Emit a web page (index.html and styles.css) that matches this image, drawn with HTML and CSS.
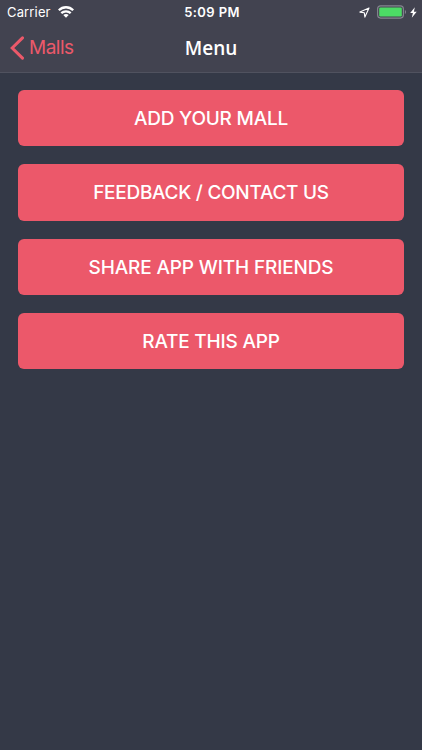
FILE: index.html
```html
<!DOCTYPE html>
<html lang="en">
<head>
<meta charset="utf-8">
<title>Menu</title>
<link rel="stylesheet" href="styles.css">
</head>
<body>
<header class="header">
  <div class="status">
    <div class="status-left">
      <span class="carrier">Carrier</span>
      <svg class="wifi" width="16" height="12" viewBox="0 0 16 12" fill="none" stroke="#fff" stroke-width="2.300">
        <path d="M.8 4.300C4.800.2 11.200.2 15.200 4.300"/>
        <path d="M3.300 7.200c2.600-2.500 6.800-2.500 9.400 0"/>
        <path d="M5.300 9.100c1.500-1.400 3.900-1.400 5.400 0L8 11.800z" fill="#fff" stroke="none"/>
      </svg>
    </div>
    <span class="time">5:09 PM</span>
    <div class="status-right">
      <svg class="location" width="11" height="11" viewBox="0 0 11 11" fill="none" stroke="#fff" stroke-width="1.100" stroke-linejoin="round">
        <path d="M10 1 .9 5.100l4.400.6.6 4.400z"/>
      </svg>
      <svg class="battery" width="30" height="14" viewBox="0 0 30 14">
        <rect x=".6" y=".9" width="25.800" height="12.200" rx="3" fill="none" stroke="#858690" stroke-width="1.100"/>
        <rect x="2.200" y="2.500" width="22.600" height="9" rx="1.300" fill="#4cdb65"/>
        <path d="M27.900 5v4c1.500-.6 1.500-3.400 0-4z" fill="#858690"/>
      </svg>
      <svg class="bolt" width="7" height="11" viewBox="0 0 7 11">
        <path d="M4.800.2.2 6.100h2.700L1.800 10.800 6.700 4.700H3.900z" fill="#fff"/>
      </svg>
    </div>
  </div>
  <nav class="navbar">
    <a class="back">
      <svg class="chevron" width="15" height="24" viewBox="0 0 15 24" fill="none" stroke="#ec596a" stroke-width="3" stroke-linecap="round" stroke-linejoin="miter">
        <path d="M12.500 1.900 2.200 12l10.300 10.100"/>
      </svg>
      <span>Malls</span>
    </a>
    <h1 class="title">Menu</h1>
  </nav>
</header>
<main class="menu">
  <button class="action add">ADD YOUR MALL</button>
  <button class="action feedback">FEEDBACK / CONTACT US</button>
  <button class="action share">SHARE APP WITH FRIENDS</button>
  <button class="action rate">RATE THIS APP</button>
</main>
</body>
</html>
```
FILE: styles.css
```css
* { box-sizing: border-box; }
body {
  margin: 0;
  height: 750px;
  overflow: hidden;
  background: #343947;
  color: #fff;
  font-family: Inter, "Liberation Sans", sans-serif;
}
.header {
  height: 73px;
  background: #424350;
  border-bottom: 1px solid #50525f;
}
.status {
  height: 23px;
  display: grid;
  grid-template-columns: 1fr auto 1fr;
  align-items: center;
  padding: 1px 5px 0 7px;
  font-size: 13px;
}
.status-left, .status-right { display: flex; align-items: center; }
.status-right { justify-content: flex-end; }
.carrier { letter-spacing: .15px; }
.wifi { margin-left: 7px; }
.time { font-weight: 600; letter-spacing: .4px; }
.battery { margin-left: 7px; }
.bolt { margin-left: 3px; }
.navbar {
  height: 49px;
  display: grid;
  grid-template-columns: 1fr auto 1fr;
  align-items: center;
  padding: 0 10px;
}
.back {
  display: flex;
  align-items: center;
  gap: 4px;
  color: #ec596a;
  font-size: 19px;
  letter-spacing: -.5px;
}
.title {
  margin: 0;
  font: 600 19px/26px "Open Sans", sans-serif;
}
.menu {
  display: flex;
  flex-direction: column;
  gap: 18px;
  padding: 17.200px 18px;
}
.action {
  height: 56.200px;
  padding: 2px 0 0;
  border: 0;
  border-radius: 6px;
  background: #ec586a;
  color: #fff;
  font: 550 19px/24px Inter, sans-serif;
}
.add { letter-spacing: -.2px; }
.feedback { letter-spacing: -.27px; }
.share { letter-spacing: -.14px; }
.rate { letter-spacing: -.2px; }
```
